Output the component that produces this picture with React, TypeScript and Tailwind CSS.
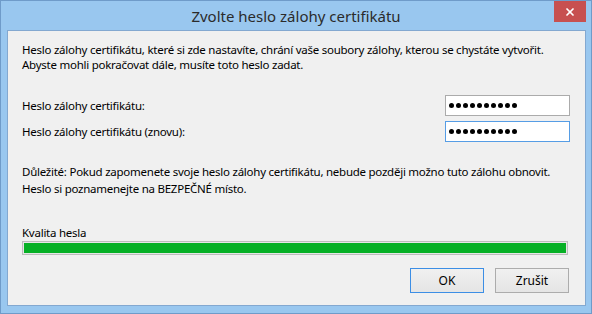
import { X } from 'lucide-react';

const font = { fontFamily: '"Noto Sans", "Open Sans", sans-serif' };

function PasswordBox({ focused }: { focused?: boolean }) {
  return (
    <div
      className={`w-[125px] h-[21px] bg-white border flex items-center gap-[2px] pl-[3px] ${
        focused ? 'border-[#569de5]' : 'border-[#ababab]'
      }`}
    >
      {Array.from({ length: 10 }).map((_, i) => (
        <span key={i} className="w-[5px] h-[5px] rounded-full bg-black" />
      ))}
    </div>
  );
}

function Button({ label, primary }: { label: string; primary?: boolean }) {
  return (
    <button
      className={`w-[74px] h-[25px] text-[12px] text-black bg-gradient-to-b from-[#f0f0f0] to-[#e5e5e5] border ${
        primary ? 'border-[#3c8ee5]' : 'border-[#acacac]'
      }`}
    >
      {label}
    </button>
  );
}

export default function App() {
  return (
    <div
      className="w-[592px] h-[314px] bg-[#99c7ef] border border-[#6f9bc9] relative text-[#1e1e1e]"
      style={font}
    >
      {/* title bar */}
      <div className="h-[29px] flex items-center justify-center text-[15px] text-[#2b2b2b] pt-[1px]">
        Zvolte heslo zálohy certifikátu
      </div>
      <div className="absolute top-0 left-[553px] w-[32px] h-[21px] bg-[#c75050] flex items-center justify-center">
        <X size={12} strokeWidth={3.5} className="text-white" />
      </div>

      {/* client area */}
      <div className="ml-[6px] w-[579px] h-[276px] bg-[#f0f0f0] border border-[#83a8d0] pl-[14px] pr-[15px] pt-[11px] text-[11.5px] tracking-[-0.25px] leading-[15px] text-black whitespace-nowrap">
        <p>
          Heslo zálohy certifikátu, které si zde nastavíte, chrání vaše soubory zálohy, kterou se chystáte vytvořit.
          <br />
          Abyste mohli pokračovat dále, musíte toto heslo zadat.
        </p>

        <div className="mt-[23px] flex flex-col gap-[5px]">
          <div className="flex items-center justify-between">
            <span>Heslo zálohy certifikátu:</span>
            <PasswordBox />
          </div>
          <div className="flex items-center justify-between">
            <span>Heslo zálohy certifikátu (znovu):</span>
            <PasswordBox focused />
          </div>
        </div>

        <p className="mt-[21px] leading-[17px]">
          Důležité: Pokud zapomenete svoje heslo zálohy certifikátu, nebude později možno tuto zálohu obnovit.
          <br />
          Heslo si poznamenejte na BEZPEČNÉ místo.
        </p>

        <div className="mt-[28px]">Kvalita hesla</div>
        <div className="mt-[1px] mr-[2px] h-[14px] border border-[#bcbcbc] bg-[#e6e6e6] p-[1px]">
          <div className="h-full w-full bg-[#06b025]" />
        </div>

        <div className="mt-[13px] flex justify-end gap-[11px] pr-[1px] tracking-normal">
          <Button label="OK" primary />
          <Button label="Zrušit" />
        </div>
      </div>
    </div>
  );
}
